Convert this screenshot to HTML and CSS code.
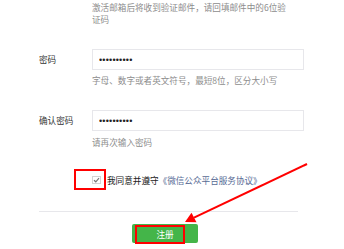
FILE: index.html
```html
<!DOCTYPE html>
<html lang="zh-CN">
<head>
    <meta charset="UTF-8">
    <meta name="viewport" content="width=device-width, initial-scale=1.0">
    <title>注册</title>
    <link rel="stylesheet" href="styles.css">
</head>
<body>
    <div class="page">
        <form class="form">
            <p class="tips tips-top">激活邮箱后将收到验证邮件，请回填邮件中的6位验证码</p>

            <div class="row">
                <label class="label">密码</label>
                <div class="field">
                    <input class="input" type="password" value="1234567890">
                    <p class="tips">字母、数字或者英文符号，最短8位，区分大小写</p>
                </div>
            </div>

            <div class="row">
                <label class="label">确认密码</label>
                <div class="field">
                    <input class="input" type="password" value="1234567890">
                    <p class="tips tips-confirm">请再次输入密码</p>
                </div>
            </div>

            <div class="agree">
                <span class="checkbox">
                    <svg width="7" height="6" viewBox="0 0 7 6"><path d="M1 3.2 L2.8 4.8 L6 1.2" fill="none" stroke="#777" stroke-width="1.2"/></svg>
                </span>我同意并遵守<a class="link" href="#">《微信公众平台服务协议》</a>
            </div>

            <div class="divider"></div>

            <div class="actions">
                <button class="btn-primary" type="button">注册</button>
            </div>
        </form>

        <!-- annotations -->
        <div class="mark mark-check"></div>
        <div class="mark mark-btn"></div>
        <svg class="arrow" width="344" height="249" viewBox="0 0 344 249">
            <line x1="307" y1="164" x2="194" y2="217.7" stroke="#f00" stroke-width="2"/>
            <polygon points="185,222 196.5,222.3 191.5,212.8" fill="#f00"/>
        </svg>
    </div>
</body>
</html>
```

FILE: styles.css
```css
body {
    margin: 0;
    background-color: #fff;
    font-family: "Noto Sans CJK SC", sans-serif;
    font-size: 8.6px;
    color: #222;
}

.page {
    position: relative;
    width: 344px;
    height: 249px;
    overflow: hidden;
}

.form {
    margin: 0;
    padding-left: 39px;
}

.tips {
    margin: 4px 0 0;
    line-height: 12px;
    color: #8d8d8d;
}

.tips-top {
    margin: 1px 0 0 53px;
    width: 200px;
}

.tips-confirm {
    margin-top: 5px;
}

.row {
    display: flex;
    margin-top: 24px;
}

.label {
    width: 53px;
    line-height: 21px;
    color: #333;
}

.field {
    width: 212px;
}

.input {
    display: block;
    width: 100%;
    height: 21px;
    box-sizing: border-box;
    margin: 0;
    padding: 0 6px;
    border: 1px solid #e7e7eb;
    font-family: "Liberation Sans", sans-serif;
    font-size: 9px;
    letter-spacing: 0.2px;
    color: #222;
    outline: none;
}

.agree {
    margin-top: 26px;
    padding-left: 53px;
    line-height: 12px;
    display: flex;
    align-items: center;
}

.checkbox {
    display: inline-flex;
    align-items: center;
    justify-content: center;
    width: 9px;
    height: 8px;
    box-sizing: border-box;
    border: 1px solid #d4d4d4;
    margin-right: 6px;
}

.link {
    color: #576b95;
    text-decoration: none;
}

.divider {
    width: 259px;
    margin-top: 25px;
    border-top: 1px solid #e7e7eb;
}

.actions {
    margin-top: 12px;
    padding-left: 93px;
}

.btn-primary {
    width: 66px;
    height: 19px;
    padding: 0;
    border: none;
    border-radius: 2px;
    background-color: #44b549;
    color: #fff;
    font-family: "Noto Sans CJK SC", sans-serif;
    font-size: 8.6px;
    cursor: pointer;
}

.mark {
    position: absolute;
    box-sizing: border-box;
    border: 2px solid #f00;
}

.mark-check {
    left: 74px;
    top: 169px;
    width: 32px;
    height: 21px;
}

.mark-btn {
    left: 135px;
    top: 225px;
    width: 50px;
    height: 19px;
}

.arrow {
    position: absolute;
    left: 0;
    top: 0;
}
```
